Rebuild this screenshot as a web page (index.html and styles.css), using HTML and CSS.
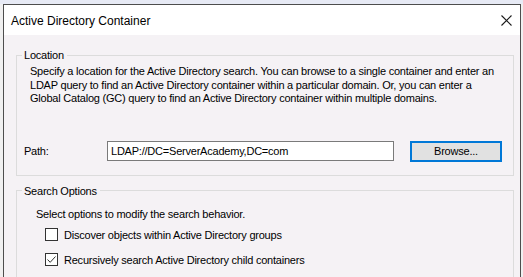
FILE: index.html
```html
<!DOCTYPE html>
<html lang="en">
<head>
  <meta charset="UTF-8" />
  <title>Active Directory Container</title>
  <link rel="stylesheet" href="styles.css">
</head>
<body>

  <div class="window">
    <div class="titlebar">
      <span class="title">Active Directory Container</span>
      <svg class="close" width="11" height="11" viewBox="0 0 11 11">
        <path d="M0.5 0.5 L10.5 10.5 M10.5 0.5 L0.5 10.5" stroke="#1a1a1a" stroke-width="1.1" fill="none"/>
      </svg>
    </div>

    <div class="content">
      <fieldset class="group location">
        <legend>Location</legend>
        <p class="desc">Specify a location for the Active Directory search. You can browse to a single container and enter an LDAP query to find an Active Directory container within a particular domain. Or, you can enter a Global Catalog (GC) query to find an Active Directory container within multiple domains.</p>
        <div class="path-row">
          <label for="path">Path:</label>
          <input type="text" id="path" value="LDAP://DC=ServerAcademy,DC=com" />
          <button>Browse...</button>
        </div>
      </fieldset>

      <fieldset class="group options">
        <legend>Search Options</legend>
        <p class="hint">Select options to modify the search behavior.</p>
        <label class="check"><span class="box"></span>Discover objects within Active Directory groups</label>
        <label class="check"><span class="box">
          <svg width="11" height="11" viewBox="0 0 11 11"><path d="M1.5 5.5 L4.2 8.3 L9.5 2.5" stroke="#333" stroke-width="1" fill="none"/></svg>
        </span>Recursively search Active Directory child containers</label>
      </fieldset>
    </div>
  </div>

</body>
</html>
```

FILE: styles.css
```css
* {
  box-sizing: border-box;
}

body {
  margin: 0;
  height: 277px;
  overflow: hidden;
  font-family: 'Liberation Sans', Arial, sans-serif;
  font-size: 11px;
  letter-spacing: -0.22px;
  color: #000;
  background: linear-gradient(#e7eaf5 0, #e7eaf5 4px, #f0f0f0 4px);
  padding: 4px 2px 0 3px;
}

.window {
  height: 100%;
  border: 1px solid #4d4d4d;
  border-bottom: none;
  background-color: #f5f2f5;
  display: flex;
  flex-direction: column;
  overflow: hidden;
}

.titlebar {
  flex-shrink: 0;
  height: 30px;
  background-color: #ffffff;
  display: flex;
  align-items: center;
  justify-content: space-between;
  padding: 1px 8px 0 7px;
}

.title {
  font-size: 12px;
  letter-spacing: 0;
  color: #000;
}

.close {
  display: block;
}

.content {
  flex: 1;
  display: flex;
  flex-direction: column;
  padding: 13px 6px 0 12px;
}

.group {
  margin: 0;
  border: 1px solid #dcdcdc;
  padding: 0;
  min-width: 0;
}

.group legend {
  margin-left: 5px;
  padding: 0 3px 0 2px;
  line-height: 14px;
}

.desc {
  margin: 3px 14px 0 13px;
  line-height: 13.5px;
}

.path-row {
  display: flex;
  align-items: center;
  margin: 35px 0 13px 7px;
}

.path-row label {
  width: 83px;
}

.path-row input {
  width: 287px;
  height: 20px;
  border: 1px solid #7a7a7a;
  padding: 0 3px;
  font: inherit;
  letter-spacing: inherit;
  background: #fff;
  outline: none;
}

.path-row button {
  margin-left: 16px;
  width: 92px;
  height: 21px;
  border: 2px solid #0078d7;
  background-color: #e1e1e1;
  font: inherit;
  letter-spacing: inherit;
  padding: 0;
}

.options {
  flex: 1;
  margin-top: 8px;
  border-bottom: none;
}

.hint {
  margin: 10px 0 0 19px;
}

.check {
  display: flex;
  align-items: center;
  margin: 7px 0 0 28px;
  height: 16px;
}

.check + .check {
  margin-top: 9px;
}

.box {
  width: 13px;
  height: 13px;
  border: 1px solid #333;
  background: #fff;
  margin-right: 6px;
  display: flex;
  align-items: center;
  justify-content: center;
}

.box svg {
  display: block;
}
```
